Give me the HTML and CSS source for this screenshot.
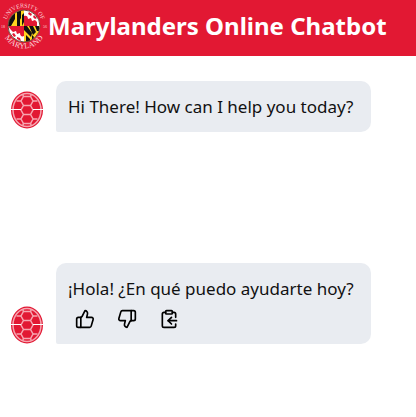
FILE: index.html
```
<!DOCTYPE html>
<html lang="en">
<head>
  <meta charset="UTF-8">
  <meta name="viewport" content="width=device-width, initial-scale=1">
  <title>Marylanders Online Chatbot</title>
  <link rel="stylesheet" href="styles.css">
</head>
<body>
  <!-- shared shapes -->
  <svg class="sprite" aria-hidden="true">
    <symbol id="shell" viewBox="0 0 32 38">
      <ellipse cx="16" cy="19" rx="16" ry="18.5" fill="#e21833"/>
      <g fill="none" stroke="#f6a5b0" stroke-width="1.5">
        <ellipse cx="16" cy="19" rx="14" ry="16.6"/>
        <path d="M12.500 5.500h7L22 10l-2.500 4.500h-7L10 10zM12.500 14.500h7L22 19l-2.500 4.500h-7L10 19zM12.500 23.500h7L22 28l-2.500 4.500h-7L10 28z"/>
        <path d="M10 10H5.500M22 10h4.500M10 28H5.500M22 28h4.500M12.500 5.500l-1-2.500M19.500 5.500l1-2.500M12.500 32.500l-1 2.500M19.500 32.500l1 2.500"/>
      </g>
      <path d="M0 18.500h10M22 18.500h10" stroke="#fff"/>
    </symbol>
  </svg>

  <header class="header">
    <svg class="seal" viewBox="0 0 48 48" role="img" aria-label="University of Maryland">
      <defs>
        <clipPath id="globe"><circle cx="24" cy="24" r="16"/></clipPath>
        <path id="arc-top" d="M5.500 24a18.500 18.500 0 0 1 37 0"/>
        <path id="arc-bottom" d="M1.500 24a22.500 22.500 0 0 0 45 0"/>
      </defs>
      <circle cx="24" cy="24" r="16" fill="#fff"/>
      <g clip-path="url(#globe)">
        <path fill="#ffd520" d="M8 8h16v16H8zM24 24h16v16H24z"/>
        <path fill="#fff" d="M24 8h16v16H24zM8 24h16v16H8z"/>
        <path fill="#111" d="M11 14l4-3v6l-4 7H8v-5zM17 10l4-2v8l-4 7zM22 13l2-2v9l-2 4zM17 21l3-4v7h-3z"/>
        <path fill="#111" d="M24 24h3l5 7-1 4-7-7zM29 24h4l3 6-3 3zM35 24h4v5h-2zM26 33l4 4v3h-4zM32 33l2 2-2 4z"/>
        <!-- bottony crosses -->
        <path fill="#e21833" d="M24 14c2-1 4 0 4 3l3-1 1 3 3-1 2 2v4H24zM8 24h16v10c-2 1-4 0-4-3l-3 1-1-3-3 1-2-2z"/>
        <path fill="#e21833" d="M29 10l3 2-1 2-3-2zM34 13l3 3-2 1-2-2zM12 32l2-1 2 3-2 1zM17 35l3 1 1 3-4-2z"/>
      </g>
      <circle cx="24" cy="24" r="16" fill="none" stroke="#6b4a3a" stroke-width="1"/>
      <g class="seal-text" text-anchor="middle">
        <text><textPath href="#arc-top" startOffset="50%">UNIVERSITY OF</textPath></text>
        <text class="seal-name"><textPath href="#arc-bottom" startOffset="50%">MARYLAND</textPath></text>
        <text class="seal-year" x="3" y="26">18</text>
        <text class="seal-year" x="45" y="26">56</text>
      </g>
    </svg>
    <h1 class="title">Marylanders Online Chatbot</h1>
  </header>

  <main class="chat">
    <div class="message greeting">
      <svg class="avatar" role="img" aria-label="Chatbot"><use href="#shell"/></svg>
      <div class="bubble">
        <p class="text">Hi There! How can I help you today?</p>
      </div>
    </div>

    <div class="message reply">
      <svg class="avatar" role="img" aria-label="Chatbot"><use href="#shell"/></svg>
      <div class="bubble">
        <p class="text" lang="es">¡Hola! ¿En qué puedo ayudarte hoy?</p>
        <div class="actions">
          <button class="action" type="button" aria-label="Good response">
            <svg viewBox="0 0 24 24"><path d="M7 10v12"/><path d="M15 5.880 14 10h5.830a2 2 0 0 1 1.920 2.560l-2.330 8A2 2 0 0 1 17.500 22H4a2 2 0 0 1-2-2v-8a2 2 0 0 1 2-2h2.760a2 2 0 0 0 1.790-1.110L12 2a3.130 3.130 0 0 1 3 3.880Z"/></svg>
          </button>
          <button class="action" type="button" aria-label="Bad response">
            <svg viewBox="0 0 24 24"><path d="M17 14V2"/><path d="M9 18.120 10 14H4.170a2 2 0 0 1-1.920-2.560l2.330-8A2 2 0 0 1 6.500 2H20a2 2 0 0 1 2 2v8a2 2 0 0 1-2 2h-2.760a2 2 0 0 0-1.790 1.110L12 22a3.130 3.130 0 0 1-3-3.880Z"/></svg>
          </button>
          <button class="action" type="button" aria-label="Copy">
            <svg viewBox="0 0 24 24"><rect x="8" y="2" width="8" height="4" rx="1"/><path d="M8 4H6a2 2 0 0 0-2 2v14a2 2 0 0 0 2 2h12a2 2 0 0 0 2-2v-2"/><path d="M16 4h2a2 2 0 0 1 2 2v4"/><path d="M21 14H11"/><path d="m15 10-4 4 4 4"/></svg>
          </button>
        </div>
      </div>
    </div>
  </main>
</body>
</html>
```

FILE: styles.css
```
:root {
  --umd-red: #e21833;
  --bubble: #e9ecf1;
}

* {
  box-sizing: border-box;
}

body {
  margin: 0;
  background: #fff;
  color: #111;
  font-family: "Noto Sans", "Open Sans", sans-serif;
}

.sprite {
  display: none;
}

/* Header */
.header {
  display: flex;
  align-items: center;
  padding: 2px 0 6px;
  background: var(--umd-red);
  color: #fff;
}

.seal {
  flex: none;
  width: 48px;
  height: 48px;
}

.seal-text {
  fill: #fbd5da;
  font-family: "Liberation Serif", serif;
  font-size: 6px;
}

.seal-name {
  font-size: 8px;
}

.seal-year {
  font-size: 4px;
}

.title {
  margin: 0;
  font-size: 24px;
  line-height: 32px;
  font-weight: 700;
  white-space: nowrap;
}

/* Messages */
.chat {
  padding: 25px 11px;
}

.message {
  display: flex;
  align-items: flex-end;
  gap: 13px;
}

.reply {
  margin-top: 131px;
}

.avatar {
  flex: none;
  width: 32px;
  height: 38px;
}

.greeting .avatar {
  margin-bottom: 3px;
}

.bubble {
  min-width: 80%;
  padding: 13px 12px;
  background: var(--bubble);
  border-radius: 10px 10px 10px 2px;
}

.text {
  margin: 0;
  font-size: 17px;
  line-height: 25px;
  white-space: nowrap;
}

.actions {
  display: flex;
  gap: 22px;
  padding: 8px 7px 2px;
}

.action {
  display: flex;
  padding: 0;
  border: 0;
  background: none;
  color: #000;
  cursor: pointer;
}

.action svg {
  width: 20px;
  height: 20px;
  fill: none;
  stroke: currentColor;
  stroke-width: 2;
  stroke-linecap: round;
  stroke-linejoin: round;
}
```
